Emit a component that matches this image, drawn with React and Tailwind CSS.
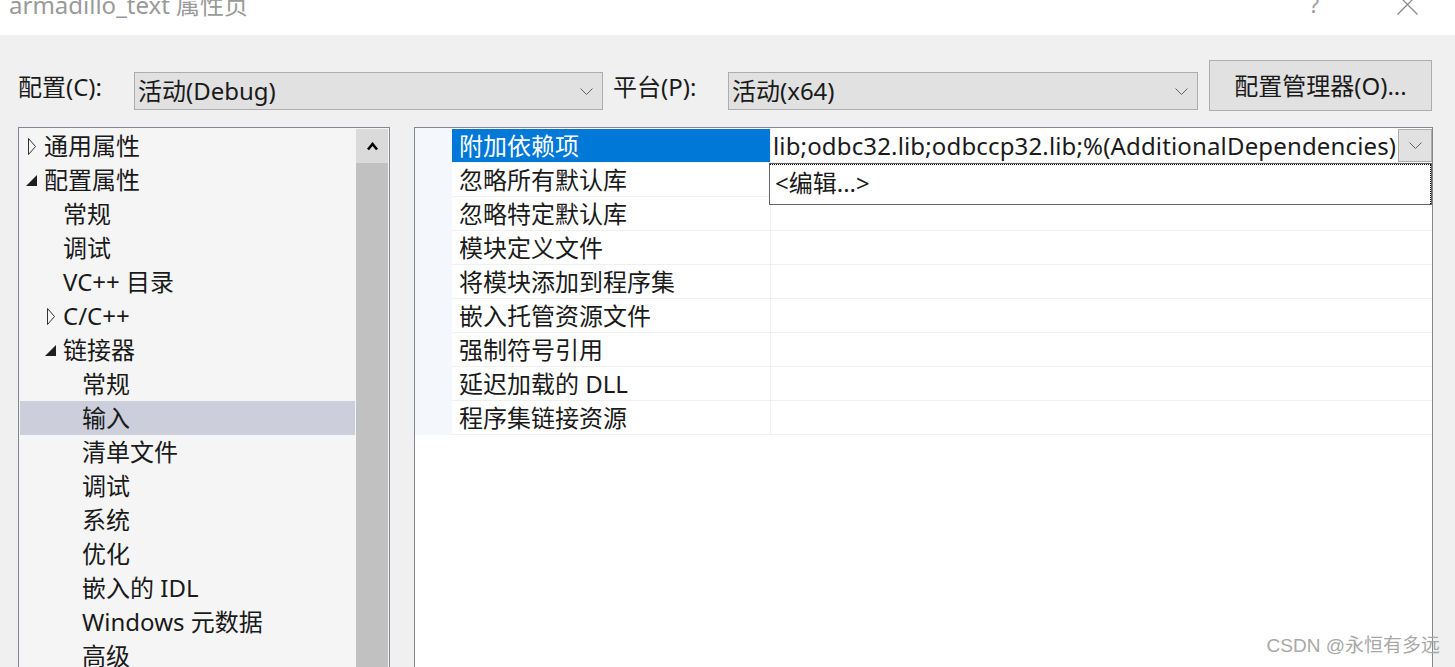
import React from 'react';

const treeItems = [
    { label: '通用属性', level: 0, arrow: 'closed' },
    { label: '配置属性', level: 0, arrow: 'open' },
    { label: '常规', level: 1 },
    { label: '调试', level: 1 },
    { label: 'VC++ 目录', level: 1 },
    { label: 'C/C++', level: 1, arrow: 'closed' },
    { label: '链接器', level: 1, arrow: 'open' },
    { label: '常规', level: 2 },
    { label: '输入', level: 2, selected: true },
    { label: '清单文件', level: 2 },
    { label: '调试', level: 2 },
    { label: '系统', level: 2 },
    { label: '优化', level: 2 },
    { label: '嵌入的 IDL', level: 2 },
    { label: 'Windows 元数据', level: 2 },
    { label: '高级', level: 2 },
];

const props = [
    '附加依赖项',
    '忽略所有默认库',
    '忽略特定默认库',
    '模块定义文件',
    '将模块添加到程序集',
    '嵌入托管资源文件',
    '强制符号引用',
    '延迟加载的 DLL',
    '程序集链接资源',
];

const indent = { 0: 'pl-[6px]', 1: 'pl-[25px]', 2: 'pl-[44px]' };

const Chevron = ({ color = '#606060' }) => (
    <svg width="13" height="7" viewBox="0 0 13 7" fill="none">
        <path d="M0.5 0.5 L6.5 6.5 L12.5 0.5" stroke={color} strokeWidth="1" />
    </svg>
);

const Arrow = ({ type }) => {
    if (type === 'closed') {
        return (
            <svg width="9" height="17" viewBox="0 0 9 17" className="ml-[2px]">
                <path d="M0.5 0.5 L7.5 8.5 L0.5 16.5 Z" fill="none" stroke="#333" strokeWidth="1" />
            </svg>
        );
    }
    if (type === 'open') {
        return (
            <svg width="11" height="11" viewBox="0 0 11 11">
                <path d="M11 0 L11 11 L0 11 Z" fill="#1e1e1e" />
            </svg>
        );
    }
    return null;
};

const ComboBox = ({ text, width }) => (
    <div className={`${width} h-[38px] mt-[37px] bg-[#e1e1e1] border border-[#adadad] flex items-center pl-[3px] pr-[9px]`}>
        <span className="flex-1 whitespace-nowrap">{text}</span>
        <Chevron />
    </div>
);

const App = () => {
    return (
        <div className="w-[1455px] h-[667px] overflow-hidden bg-[#f0f0f0] text-[24px] text-[#1a1a1a] font-['Noto_Sans','Noto_Sans_CJK_SC',sans-serif] relative">
            {/* title bar */}
            <div className="h-[35px] bg-white overflow-hidden flex">
                <div className="pl-[9px] mt-[-7px] leading-[24px] text-[#9a9a9a] whitespace-nowrap">armadillo_text 属性页</div>
                <div className="ml-auto mt-[-8px] leading-[24px] text-[#9a9a9a] text-[22px]">?</div>
                <div className="ml-[78px] mr-[37px] mt-[-6px]">
                    <svg width="21" height="21" viewBox="0 0 21 21">
                        <path d="M0.5 0.5 L20.5 20.5 M20.5 0.5 L0.5 20.5" stroke="#8a8a8a" strokeWidth="1.3" />
                    </svg>
                </div>
            </div>

            {/* config row */}
            <div className="flex h-[92px] pl-[18px]">
                <div className="w-[116px] h-[38px] mt-[33px] flex items-center whitespace-nowrap">配置(C):</div>
                <ComboBox text="活动(Debug)" width="w-[469px]" />
                <div className="ml-[10px] w-[115px] h-[38px] mt-[33px] flex items-center whitespace-nowrap">平台(P):</div>
                <ComboBox text="活动(x64)" width="w-[470px]" />
                <button className="ml-[11px] w-[223px] h-[51px] mt-[25px] bg-[#e1e1e1] border border-[#adadad] flex items-center justify-center whitespace-nowrap">
                    配置管理器(O)...
                </button>
            </div>

            {/* panels */}
            <div className="flex pl-[18px]">
                {/* tree */}
                <div className="w-[372px] h-[560px] border border-[#828790] bg-[#f5f5f5] flex">
                    <div className="flex-1 px-[1px] pt-[1px]">
                        {treeItems.map((item, i) => (
                            <div
                                key={i}
                                className={`h-[34px] flex items-center whitespace-nowrap ${indent[item.level]} ${item.selected ? 'bg-[#cccedb]' : ''}`}
                            >
                                <div className="w-[18px] flex items-center">
                                    <Arrow type={item.arrow} />
                                </div>
                                <span>{item.label}</span>
                            </div>
                        ))}
                    </div>
                    <div className="w-[32px] mr-[1px] mt-[1px] bg-[#c1c1c1] flex flex-col">
                        <div className="h-[34px] bg-[#dadada] flex items-center justify-center">
                            <svg width="11" height="9" viewBox="0 0 11 9">
                                <path d="M1 7.5 L5.5 2 L10 7.5" fill="none" stroke="#000" strokeWidth="2.6" />
                            </svg>
                        </div>
                    </div>
                </div>

                {/* property grid */}
                <div className="ml-[24px] w-[1019px] h-[560px] border border-[#828790] bg-white relative">
                    <div className="flex">
                        <div className="w-[37px] h-[307px] bg-[#f4f7fc]"></div>
                        <div className="flex-1 pt-[1px]">
                            {props.map((name, i) => (
                                <div key={i} className="h-[34px] flex border-b border-[#f0f0f0]">
                                    <div className={`w-[318px] flex items-center pl-[7px] whitespace-nowrap ${i === 0 ? 'bg-[#0078d7] text-white' : ''}`}>
                                        {name}
                                    </div>
                                    <div className="flex-1 flex items-center border-l border-[#f0f0f0] min-w-0">
                                        {i === 0 && (
                                            <>
                                                <span className="flex-1 pl-[2px] tracking-[0.15px] whitespace-nowrap overflow-hidden">lib;odbc32.lib;odbccp32.lib;%(AdditionalDependencies)</span>
                                                <div className="w-[34px] h-[33px] bg-[#e1e1e1] border border-[#adadad] flex items-center justify-center">
                                                    <Chevron />
                                                </div>
                                            </>
                                        )}
                                    </div>
                                </div>
                            ))}
                        </div>
                    </div>

                    {/* dropdown popup */}
                    <div className="absolute left-[354px] top-[35px] w-[663px] h-[42px] bg-white border border-[#646464]">
                        <div className="h-full border-t border-r border-dotted border-black flex items-center pl-[5px] pb-[3px] whitespace-nowrap">
                            &lt;编辑...&gt;
                        </div>
                    </div>
                </div>
            </div>

            {/* watermark */}
            <div className="absolute right-[15px] bottom-[7px] text-[19px] text-[#a8a8a8] font-['Liberation_Sans','Noto_Sans_CJK_SC',sans-serif] whitespace-nowrap">
                CSDN @永恒有多远
            </div>
        </div>
    );
};

export default App;
